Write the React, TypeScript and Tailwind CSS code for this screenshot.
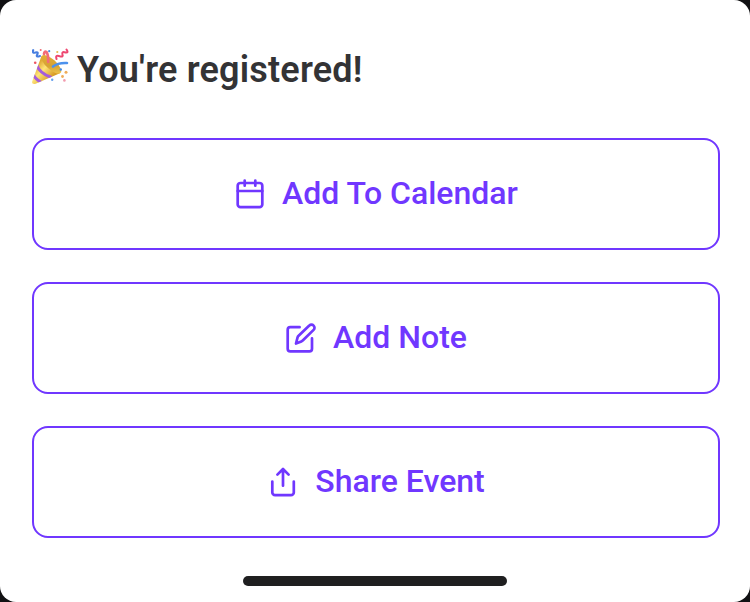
import type { ReactNode } from "react";

function Icon({ children }: { children: ReactNode }) {
  return (
    <svg
      className="size-8 shrink-0"
      viewBox="0 0 32 32"
      fill="none"
      stroke="currentColor"
      strokeWidth="2.7"
      strokeLinecap="round"
      strokeLinejoin="round"
      aria-hidden="true"
    >
      {children}
    </svg>
  );
}

function CalendarIcon() {
  return (
    <Icon>
      <rect x="3.7" y="5" width="24.6" height="24.2" rx="2.8" />
      <path d="M3.7 13H28.3M10.7 2.6V7.7M21.3 2.6V7.7" />
    </Icon>
  );
}

function NoteIcon() {
  return (
    <Icon>
      <path d="M14.6 5.2H5.3A2.6 2.6 0 0 0 2.7 7.8V26.7A2.6 2.6 0 0 0 5.3 29.3H24.4A2.6 2.6 0 0 0 27 26.7V16.4" />
      <path d="M11 21.5L12.5 15.6Q12.8 14.6 13.6 13.8L24.3 3.6A3 3 0 0 1 28.6 7.9L18 18.3Q17.3 19 16.3 19.4Z" />
    </Icon>
  );
}

function ShareIcon() {
  return (
    <Icon>
      <path d="M5.3 15.5V26.4A2.8 2.8 0 0 0 8.1 29.2H24A2.8 2.8 0 0 0 26.8 26.4V15.5" />
      <path d="M16 19.7V3M10.4 8.6L16 3L21.6 8.6" />
    </Icon>
  );
}

function PartyPopper() {
  return (
    <svg className="-mt-[7px] mr-[7px] size-[38px] shrink-0" viewBox="0 0 38 38" aria-hidden="true">
      <defs>
        <linearGradient id="cone" x1="4" y1="18" x2="18" y2="31" gradientUnits="userSpaceOnUse">
          <stop stopColor="#e0aa35" />
          <stop offset=".4" stopColor="#ffe478" />
          <stop offset="1" stopColor="#d99c26" />
        </linearGradient>
        <linearGradient id="mouth" x1="12" y1="9" x2="27" y2="25" gradientUnits="userSpaceOnUse">
          <stop stopColor="#e3ae35" />
          <stop offset=".55" stopColor="#d6a335" />
          <stop offset="1" stopColor="#f3cc50" />
        </linearGradient>
        <clipPath id="cone-clip">
          <path d="M9.5 8L0 34Q0 36.5 3 36L28.5 25Z" />
        </clipPath>
      </defs>
      <path d="M9.5 8L0 34Q0 36.5 3 36L28.5 25Z" fill="url(#cone)" />
      <g clipPath="url(#cone-clip)" stroke="#a55ddb" strokeWidth="2.9" fill="none">
        <path d="M4.5 16.5Q7.5 25.5 19.5 29.5" />
        <path d="M0.5 24.5Q2.5 31 9.5 34.5" />
      </g>
      <ellipse cx="19.3" cy="16.3" rx="12.6" ry="5" transform="rotate(42 19.3 16.3)" fill="url(#mouth)" />
      <g fill="none" strokeLinecap="round">
        <path d="M12 6Q12.5 2.5 14.5 4Q16.5 7 16.2 14" stroke="#f26b78" strokeWidth="2.7" />
        <path d="M21 18.5Q26 14.5 35 15" stroke="#4c91ed" strokeWidth="2.6" />
        <path d="M1.2 2.2Q0 5.5 3.5 4.5Q7 3.5 5 7Q3.8 9.5 8 8" stroke="#477ee0" strokeWidth="2.1" />
        <path d="M34.5 1.5Q37 5 33.5 4.5Q29.5 3 30.5 6.5Q31.5 9.3 27.8 8.2Q23 6.5 24.5 11" stroke="#ee4770" strokeWidth="2.1" />
      </g>
      <g>
        <circle cx="3.2" cy="14.8" r="1.3" fill="#ed5563" />
        <circle cx="8.7" cy="2" r="1" fill="#ee6972" />
        <circle cx="17.2" cy="3.2" r="1.1" fill="#418be7" />
        <circle cx="25.3" cy="4" r="1.1" fill="#e6b94b" />
        <circle cx="28.8" cy="21.5" r="1.2" fill="#418be7" />
        <circle cx="34" cy="24.3" r="1.5" fill="#efac58" />
        <circle cx="30.5" cy="28.5" r="1.4" fill="#efac58" />
        <circle cx="32.4" cy="32.4" r="1.3" fill="#f29caf" />
        <circle cx="20.2" cy="31.7" r="1.2" fill="#649fee" />
      </g>
    </svg>
  );
}

function ActionButton({ icon, label }: { icon: ReactNode; label: string }) {
  return (
    <button
      type="button"
      className="flex h-28 w-full items-center justify-center gap-4 rounded-2xl border-2 border-[#7037ff] bg-white text-[32px] leading-10 font-medium text-[#7037ff]"
    >
      {icon}
      <span className="-mt-0.5">{label}</span>
    </button>
  );
}

export default function App() {
  return (
    <div className="h-[602px] w-[750px] bg-[#111113] font-['Roboto',sans-serif] antialiased">
      <main className="flex h-full flex-col rounded-2xl bg-white pr-[30px] pl-8 pt-12">
        <h1 className="flex h-11 items-center text-[36px] leading-11 font-semibold tracking-[0.2px] text-[#333335]">
          <PartyPopper />
          <span>You're registered!</span>
        </h1>
        <div className="mt-[46px] flex flex-col gap-8">
          <ActionButton icon={<CalendarIcon />} label="Add To Calendar" />
          <ActionButton icon={<NoteIcon />} label="Add Note" />
          <ActionButton icon={<ShareIcon />} label="Share Event" />
        </div>
        <div className="mt-[38px] ml-[211px] h-2.5 w-[264px] rounded-full bg-[#1f1f20]" />
      </main>
    </div>
  );
}
